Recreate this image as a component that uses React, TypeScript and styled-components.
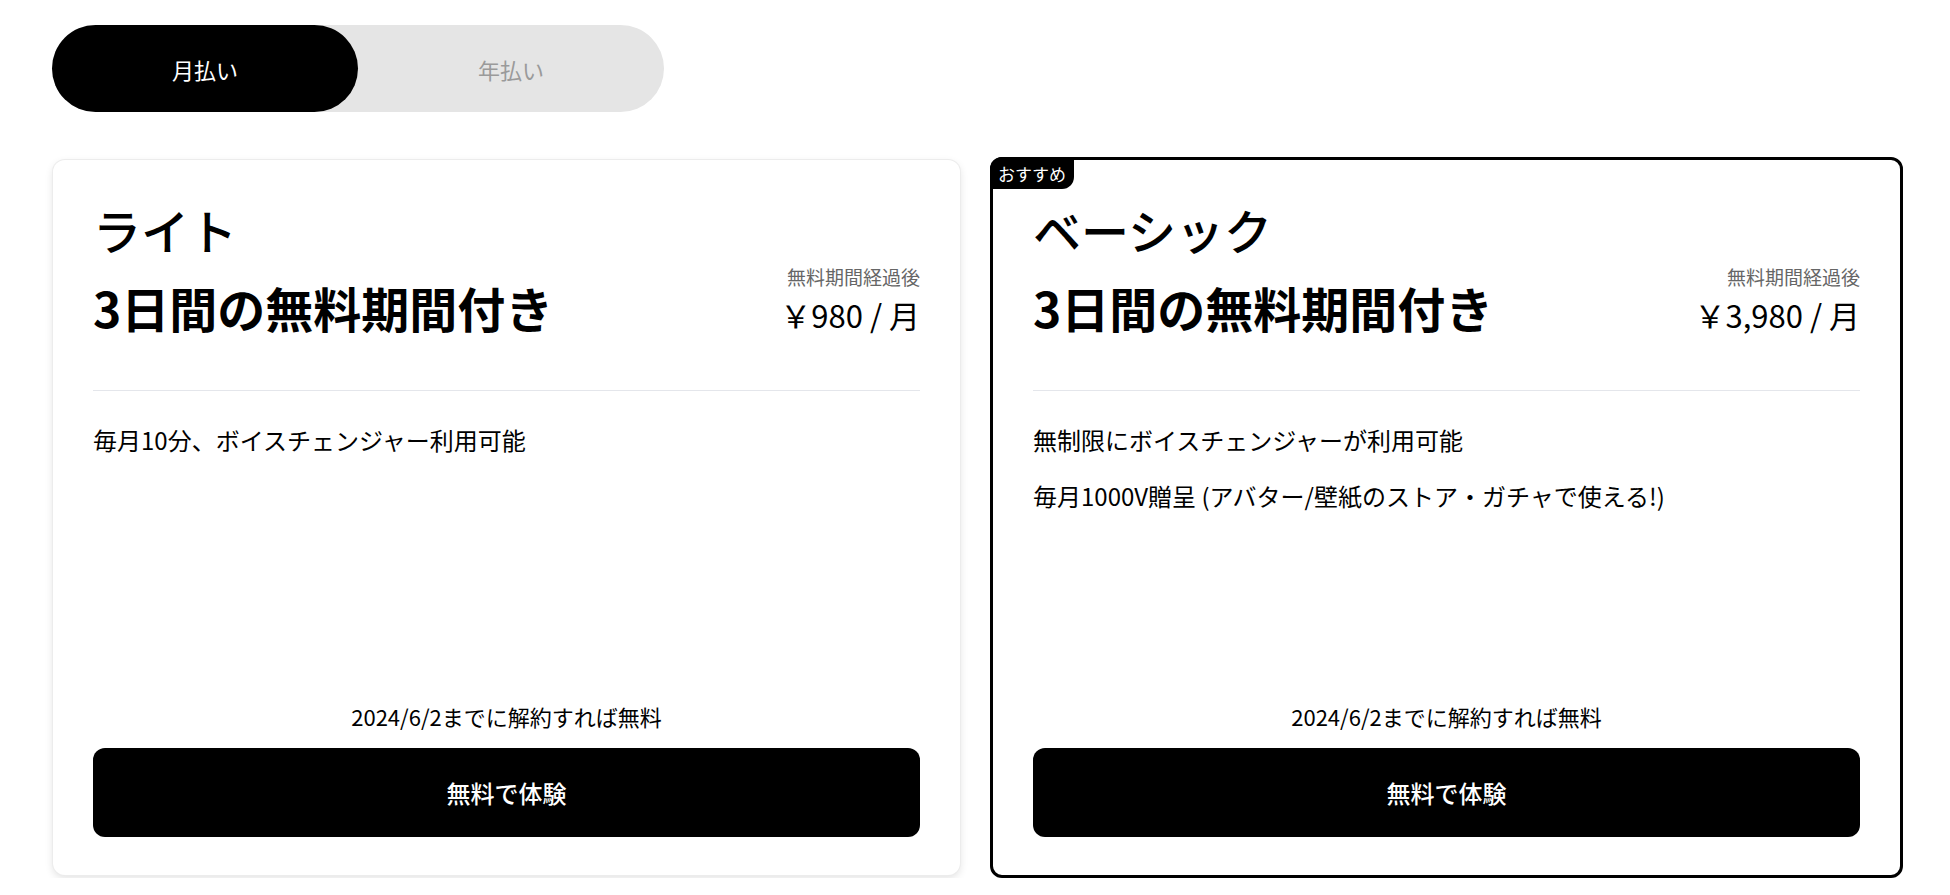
import * as React from 'react';
import styled, { createGlobalStyle, css } from 'styled-components';

const GlobalStyle = createGlobalStyle`
  body {
    margin: 0;
    background: #fff;
    font-family: "Noto Sans CJK JP", "Noto Sans", sans-serif;
    color: #000;
  }
`

const Page = styled.div`
  padding: 25px 47px 0 53px;
`

const Toggle = styled.div`
  display: grid;
  grid-template-columns: 1fr 1fr;
  width: 612px;
  height: 87px;
  margin-left: -1px;
  border-radius: 44px;
  background: #e5e5e5;
`

const ToggleOption = styled.button<{ $active?: boolean }>`
  border: none;
  border-radius: 44px;
  font-family: inherit;
  font-size: 22px;
  background: ${p => (p.$active ? '#000' : 'transparent')};
  color: ${p => (p.$active ? '#fff' : '#9a9a9a')};
  cursor: pointer;
`

const Cards = styled.div`
  display: flex;
  align-items: center;
  gap: 30px;
  margin-top: 45px;
`

const Card = styled.section<{ $featured?: boolean }>`
  position: relative;
  flex: 1 1 0;
  box-sizing: content-box;
  height: 637px;
  padding: 40px 40px 38px;
  display: flex;
  flex-direction: column;
  background: #fff;
  border-radius: 12px;
  ${p =>
    p.$featured
      ? css`
          border: 3px solid #000;
        `
      : css`
          box-shadow: 0 0 0 1px #ececec, 0 3px 8px rgba(0, 0, 0, 0.12);
        `}
`

const Badge = styled.div`
  position: absolute;
  top: -3px;
  left: -3px;
  height: 32px;
  padding: 0 8px;
  display: flex;
  align-items: center;
  background: #000;
  color: #fff;
  font-size: 17px;
  border-radius: 12px 0 12px 0;
`

const Header = styled.div`
  display: flex;
  justify-content: space-between;
  align-items: flex-end;
  padding-bottom: 54px;
  border-bottom: 1px solid #e4e6eb;
`

const PlanName = styled.h2`
  margin: 0;
  font-size: 48px;
  font-weight: 500;
  line-height: 58px;
`

const TrialTitle = styled.div`
  margin-top: 20px;
  font-size: 48px;
  font-weight: 700;
  line-height: 58px;
`

const PriceBox = styled.div`
  display: flex;
  flex-direction: column;
  align-items: flex-end;
`

const PriceNote = styled.div`
  margin-bottom: 4px;
  font-size: 19px;
  line-height: 26px;
  color: #666;
`

const Price = styled.div`
  font-size: 31px;
  line-height: 42px;
`

const Features = styled.ul`
  list-style: none;
  margin: 31px 0 0;
  padding: 0;
  display: flex;
  flex-direction: column;
  gap: 20px;
`

const Feature = styled.li`
  font-size: 24px;
  line-height: 36px;
`

const Deadline = styled.div`
  margin-top: auto;
  text-align: center;
  font-size: 22px;
  line-height: 33px;
`

const TrialButton = styled.button`
  margin-top: 15px;
  height: 89px;
  border: none;
  border-radius: 12px;
  background: #000;
  color: #fff;
  font-family: inherit;
  font-size: 24px;
  font-weight: 500;
  cursor: pointer;
`

type Plan = {
  name: string
  price: string
  features: string[]
  featured?: boolean
}

const plans: Plan[] = [
  {
    name: 'ライト',
    price: '￥980 / 月',
    features: ['毎月10分、ボイスチェンジャー利用可能'],
  },
  {
    name: 'ベーシック',
    price: '￥3,980 / 月',
    features: [
      '無制限にボイスチェンジャーが利用可能',
      '毎月1000V贈呈 (アバター/壁紙のストア・ガチャで使える!)',
    ],
    featured: true,
  },
]

const App = () => {
  const [yearly, setYearly] = React.useState(false)

  return (
    <Page>
      <GlobalStyle />
      <Toggle>
        <ToggleOption $active={!yearly} onClick={() => setYearly(false)}>月払い</ToggleOption>
        <ToggleOption $active={yearly} onClick={() => setYearly(true)}>年払い</ToggleOption>
      </Toggle>
      <Cards>
        {plans.map(plan => (
          <Card key={plan.name} $featured={plan.featured}>
            {plan.featured && <Badge>おすすめ</Badge>}
            <Header>
              <div>
                <PlanName>{plan.name}</PlanName>
                <TrialTitle>3日間の無料期間付き</TrialTitle>
              </div>
              <PriceBox>
                <PriceNote>無料期間経過後</PriceNote>
                <Price>{plan.price}</Price>
              </PriceBox>
            </Header>
            <Features>
              {plan.features.map(f => (
                <Feature key={f}>{f}</Feature>
              ))}
            </Features>
            <Deadline>2024/6/2までに解約すれば無料</Deadline>
            <TrialButton>無料で体験</TrialButton>
          </Card>
        ))}
      </Cards>
    </Page>
  )
}

export default App
